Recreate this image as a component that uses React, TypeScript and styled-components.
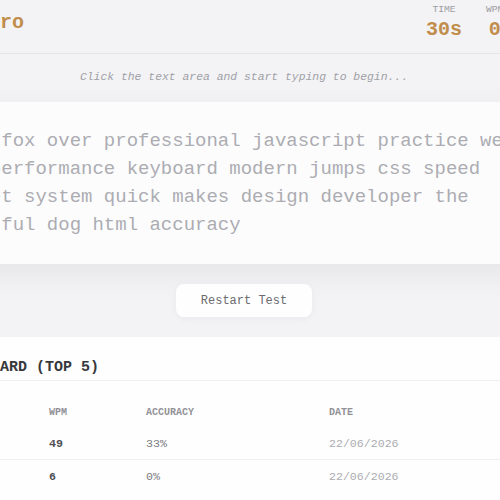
import React from "react";
import styled, { createGlobalStyle } from "styled-components";

const mono = `"Liberation Mono", "Courier New", monospace`;

const GlobalStyle = createGlobalStyle`
  html, body {
    margin: 0;
    padding: 0;
    background: #f3f3f5;
    overflow: hidden;
  }
  body {
    font-family: ${mono};
  }
`;

const Page = styled.div`
  width: 488px;
  min-height: 500px;
  display: flex;
  flex-direction: column;
  align-items: center;
  font-family: ${mono};
`;

const Header = styled.header`
  width: 1000px;
  flex-shrink: 0;
  box-sizing: border-box;
  display: flex;
  align-items: center;
  justify-content: space-between;
  padding: 4px 118px 11px 124px;
  border-bottom: 1px solid #e5e5e8;
`;

const Logo = styled.div`
  font-size: 20px;
  line-height: 24px;
  font-weight: 700;
  color: #c08d4c;
  white-space: nowrap;
`;

const Stats = styled.div`
  width: 200px;
  display: flex;
  gap: 24px;
`;

const Stat = styled.div`
  display: flex;
  flex-direction: column;
  align-items: center;
`;

const StatLabel = styled.span`
  font-size: 9.6px;
  line-height: 12px;
  color: #9c9ca2;
  text-transform: uppercase;
`;

const StatValue = styled.span`
  margin-top: 2px;
  font-size: 20px;
  line-height: 24px;
  font-weight: 700;
  color: #c08d4c;
`;

const Hint = styled.p`
  margin: 15px 0 17px;
  font-size: 11.4px;
  line-height: 16px;
  font-style: italic;
  color: #a0a0a6;
  white-space: nowrap;
`;

const TextCard = styled.div`
  width: 960px;
  flex-shrink: 0;
  box-sizing: border-box;
  padding: 25px 32px 25px;
  background: #fcfcfd;
  border-radius: 10px;
  box-shadow: 0 10px 32px rgba(0, 0, 0, 0.06);
`;

const Words = styled.div`
  max-width: 63.5ch;
  font-size: 19px;
  line-height: 28px;
  color: #acacb2;
`;

const RestartButton = styled.button`
  margin-top: 20px;
  padding: 10px 25px 8px;
  border: none;
  border-radius: 8px;
  background: #fefefe;
  box-shadow: 0 2px 8px rgba(0, 0, 0, 0.04);
  font-family: ${mono};
  font-size: 12px;
  line-height: 15px;
  color: #6a6a6f;
  cursor: pointer;
`;

const Board = styled.section`
  width: 680px;
  flex-shrink: 0;
  box-sizing: border-box;
  margin-top: 20px;
  padding: 0 24px 24px;
  background: #fefefe;
  border-radius: 10px;
  min-height: 200px;
`;

const BoardTitle = styled.h2`
  margin: 0;
  padding: 21px 0 2px;
  font-size: 15px;
  line-height: 20px;
  font-weight: 700;
  color: #38383c;
  border-bottom: 1px solid #efeff1;
`;

const Table = styled.div`
  margin-top: 14px;
`;

const Row = styled.div<{ $head?: boolean }>`
  display: grid;
  grid-template-columns: 121px 97px 183px 1fr;
  align-items: center;
  height: 32px;
  border-bottom: ${(p) => (p.$head ? "none" : "1px solid #efeff1")};
  &:last-child {
    border-bottom: none;
  }
`;

const HeadCell = styled.span`
  padding-top: 2px;
  font-size: 10px;
  font-weight: 700;
  color: #929298;
  text-transform: uppercase;
`;

const Cell = styled.span<{ $tone: "strong" | "mid" | "light" }>`
  padding-top: 1px;
  font-size: 11.6px;
  font-weight: ${(p) => (p.$tone === "strong" ? 700 : 400)};
  color: ${(p) =>
    p.$tone === "strong" ? "#4e4e54" : p.$tone === "mid" ? "#7a7a80" : "#acacb2"};
`;

const lines = [
  "typing test brown fox over professional javascript practice web",
  "lazy code typing performance keyboard modern jumps css speed",
  "lazy quick alphabet system quick makes design developer the",
  "brown quick wonderful dog html accuracy",
];

const entries = [
  { rank: 1, wpm: 49, acc: "33%", date: "22/06/2026" },
  { rank: 2, wpm: 6, acc: "0%", date: "22/06/2026" },
];

export default function App() {
  return (
    <>
      <GlobalStyle />
      <Page>
        <Header>
          <Logo>TypeSpeed Pro</Logo>
          <Stats>
            <Stat>
              <StatLabel>Time</StatLabel>
              <StatValue>30s</StatValue>
            </Stat>
            <Stat>
              <StatLabel>WPM</StatLabel>
              <StatValue>0</StatValue>
            </Stat>
            <Stat>
              <StatLabel>Accuracy</StatLabel>
              <StatValue>100%</StatValue>
            </Stat>
          </Stats>
        </Header>
        <Hint>Click the text area and start typing to begin...</Hint>
        <TextCard>
          <Words>{lines.join(" ")}</Words>
        </TextCard>
        <RestartButton>Restart Test</RestartButton>
        <Board>
          <BoardTitle>LEADERBOARD (TOP 5)</BoardTitle>
          <Table>
            <Row $head>
              <HeadCell>Rank</HeadCell>
              <HeadCell>WPM</HeadCell>
              <HeadCell>Accuracy</HeadCell>
              <HeadCell>Date</HeadCell>
            </Row>
            {entries.map((e) => (
              <Row key={e.rank}>
                <Cell $tone="mid">#{e.rank}</Cell>
                <Cell $tone="strong">{e.wpm}</Cell>
                <Cell $tone="mid">{e.acc}</Cell>
                <Cell $tone="light">{e.date}</Cell>
              </Row>
            ))}
          </Table>
        </Board>
      </Page>
    </>
  );
}
